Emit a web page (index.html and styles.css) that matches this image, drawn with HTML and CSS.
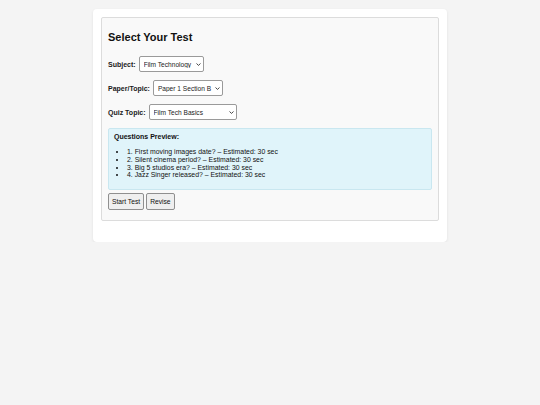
FILE: index.html
```html
<!DOCTYPE html>
<html lang="en">
<head>
<meta charset="utf-8">
<title>Select Your Test</title>
<link rel="stylesheet" href="styles.css">
</head>
<body>
<div class="card">
  <section class="panel">
    <h2 class="title">Select Your Test</h2>
    <div class="row">
      <label class="lbl" for="subject">Subject:</label>
      <span class="selwrap">
        <select id="subject" class="sel sel-subject"><option>Film Technology</option></select>
        <svg class="chev" width="5" height="3" viewBox="0 0 5 3"><path d="M0.5 0.5 L2.5 2.4 L4.5 0.5" fill="none" stroke="#333" stroke-width="0.9"/></svg>
      </span>
    </div>
    <div class="row">
      <label class="lbl" for="paper">Paper/Topic:</label>
      <span class="selwrap">
        <select id="paper" class="sel sel-paper"><option>Paper 1 Section B</option></select>
        <svg class="chev" width="5" height="3" viewBox="0 0 5 3"><path d="M0.5 0.5 L2.5 2.4 L4.5 0.5" fill="none" stroke="#333" stroke-width="0.9"/></svg>
      </span>
    </div>
    <div class="row">
      <label class="lbl" for="quiz">Quiz Topic:</label>
      <span class="selwrap">
        <select id="quiz" class="sel sel-quiz"><option>Film Tech Basics</option></select>
        <svg class="chev" width="5" height="3" viewBox="0 0 5 3"><path d="M0.5 0.5 L2.5 2.4 L4.5 0.5" fill="none" stroke="#333" stroke-width="0.9"/></svg>
      </span>
    </div>
    <div class="preview">
      <div class="preview-title">Questions Preview:</div>
      <ul class="qlist">
        <li>1. First moving images date? – Estimated: 30 sec</li>
        <li>2. Silent cinema period? – Estimated: 30 sec</li>
        <li>3. Big 5 studios era? – Estimated: 30 sec</li>
        <li>4. Jazz Singer released? – Estimated: 30 sec</li>
      </ul>
    </div>
    <div class="actions">
      <button class="btn">Start Test</button>
      <button class="btn">Revise</button>
    </div>
  </section>
</div>
</body>
</html>
```

FILE: styles.css
```css
html, body {
  margin: 0;
  padding: 0;
}
body {
  background: #f4f4f4;
  font-family: "Liberation Sans", Arial, sans-serif;
  color: #111;
  font-size: 7px;
}
.card {
  width: 338px;
  margin: 9px auto 0;
  background: #fff;
  border-radius: 4px;
  box-shadow: 0 1px 3px rgba(0, 0, 0, 0.08);
  padding: 8px 8px 21px;
}
.panel {
  background: #f9f9f9;
  border: 1px solid #dcdcdc;
  border-radius: 2px;
  padding: 7px 6px 10px;
  box-sizing: border-box;
}
.title {
  font-size: 11px;
  font-weight: bold;
  margin: 6px 0 12px;
  line-height: 13px;
  color: #111;
}
.row {
  display: flex;
  align-items: center;
  gap: 3px;
  height: 16px;
  margin-bottom: 8px;
}
.lbl {
  font-weight: bold;
  font-size: 7px;
  color: #1a1a1a;
}
.selwrap {
  position: relative;
  display: inline-flex;
}
.sel {
  -webkit-appearance: none;
  appearance: none;
  font-family: "Liberation Sans", Arial, sans-serif;
  font-size: 6.6px;
  height: 16px;
  box-sizing: border-box;
  background: #fff;
  border: 1px solid #9a9a9a;
  border-radius: 2px;
  padding: 0 10px 0 4px;
  color: #222;
}
.chev {
  position: absolute;
  right: 3px;
  top: 7px;
}
.sel-subject { width: 65px; }
.sel-paper { width: 70px; }
.sel-quiz { width: 88px; }
.preview {
  background: #e0f4fa;
  border: 1px solid #c9e7f0;
  border-radius: 2px;
  padding: 4px 5px 5px;
  margin-bottom: 3px;
}
.preview-title {
  font-weight: bold;
  font-size: 7px;
  line-height: 8px;
}
.qlist {
  margin: 7px 0 5px;
  padding-left: 13px;
  font-size: 6.9px;
  line-height: 7.8px;
}
.actions {
  display: flex;
  gap: 2px;
}
.btn {
  font-family: "Liberation Sans", Arial, sans-serif;
  font-size: 6.7px;
  height: 17px;
  padding: 0 3px;
  background: #efefef;
  border: 1px solid #8f8f8f;
  border-radius: 2px;
  color: #111;
}
```
